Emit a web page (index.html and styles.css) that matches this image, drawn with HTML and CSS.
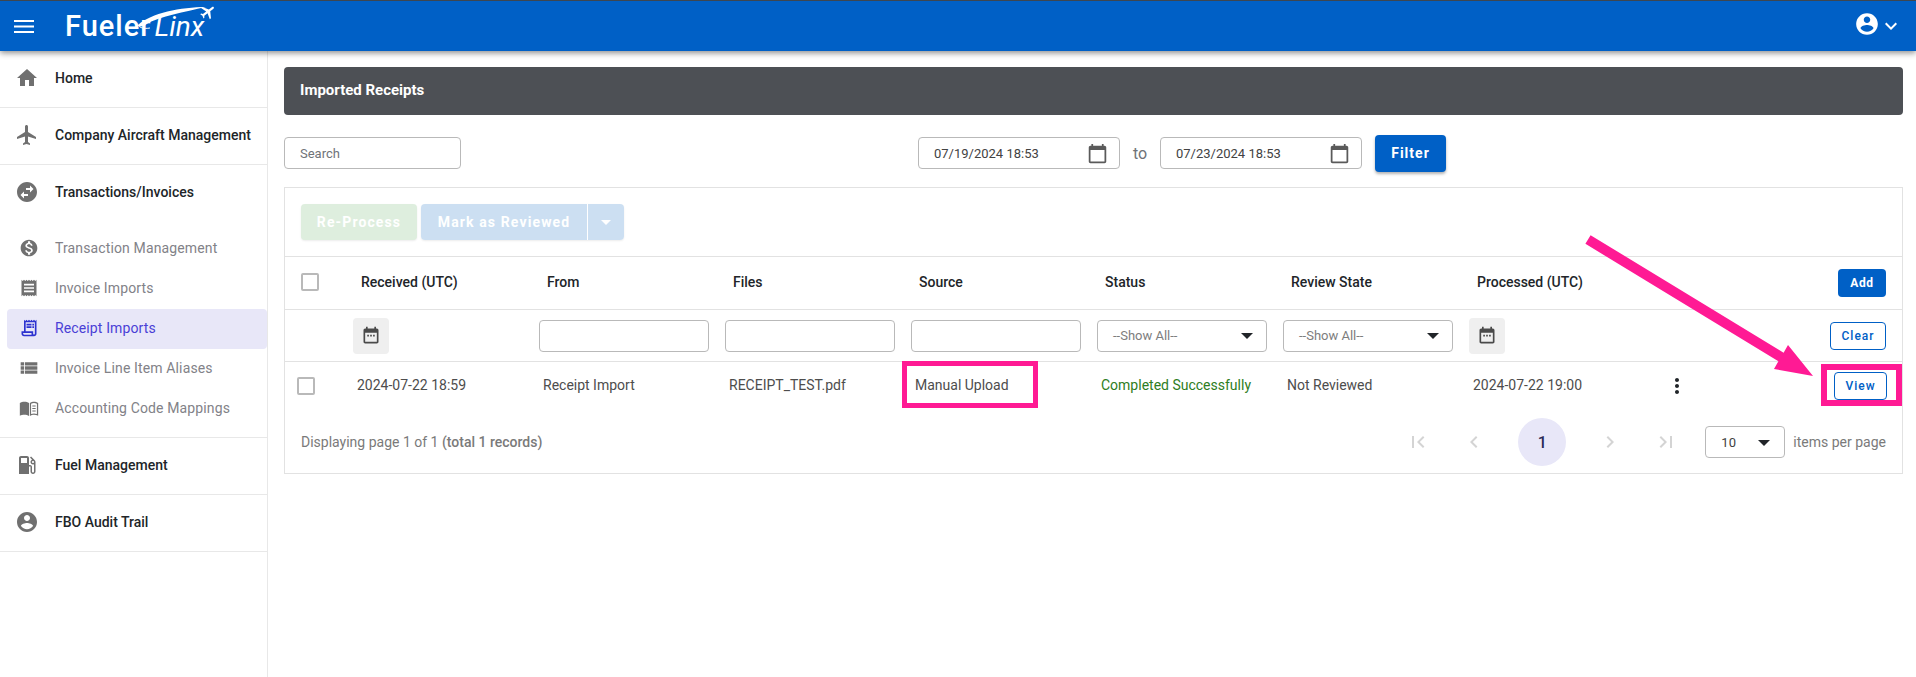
FILE: index.html
```html
<!DOCTYPE html>
<html lang="en">
<head>
<meta charset="utf-8">
<title>FuelerLinx - Imported Receipts</title>
<link rel="stylesheet" href="styles.css">
</head>
<body>
<header class="topbar">
  <svg class="hamburger" viewBox="0 0 20 13"><path d="M0 0h20v2H0zM0 5.500h20v2H0zM0 11h20v2H0z"/></svg>
  <div class="logo">
    <span class="logo-a">Fueler</span><span class="logo-b">Linx</span>
    <svg class="logo-swoosh" viewBox="0 0 150 40">
      <path d="M72 18C85 6 115 0 140 0 118 5 95 9 80 17 76 20 73 20 72 18z" fill="#fff"/>
      <path d="M72 18c2 3 6 4 12 3" fill="none" stroke="#fff" stroke-width="1"/>
      <path transform="translate(142 5) rotate(52) scale(.75) translate(-12 -12)" d="M21 16v-2l-8-5V3.500c0-.83-.67-1.500-1.500-1.500S10 2.670 10 3.500V9l-8 5v2l8-2.500V19l-2 1.500V22l3.500-1 3.500 1v-1.500L13 19v-5.500l8 2.500z" fill="#fff"/>
    </svg>
  </div>
  <div class="user">
    <svg class="user-icon" viewBox="0 0 24 24"><path d="M12 2C6.480 2 2 6.480 2 12s4.480 10 10 10 10-4.480 10-10S17.520 2 12 2zm0 3c1.660 0 3 1.340 3 3s-1.340 3-3 3-3-1.340-3-3 1.340-3 3-3zm0 14.200c-2.500 0-4.710-1.280-6-3.220.03-1.990 4-3.080 6-3.080 1.990 0 5.970 1.090 6 3.080-1.290 1.940-3.500 3.220-6 3.220z"/></svg>
    <svg class="user-caret" viewBox="0 0 24 24"><path d="M16.590 8.590L12 13.170 7.410 8.590 6 10l6 6 6-6z"/></svg>
  </div>
</header>

<div class="layout">
  <nav class="sidebar">
    <a class="nav-main"><svg class="nav-icon" viewBox="0 0 24 24"><path d="M10 20v-6h4v6h5v-8h3L12 3 2 12h3v8z"/></svg>Home</a>
    <a class="nav-main"><svg class="nav-icon" viewBox="0 0 24 24"><path d="M21 16v-2l-8-5V3.500c0-.83-.67-1.500-1.500-1.500S10 2.670 10 3.500V9l-8 5v2l8-2.500V19l-2 1.500V22l3.500-1 3.500 1v-1.500L13 19v-5.500l8 2.500z"/></svg>Company Aircraft Management</a>
    <div class="nav-group">
      <a class="nav-main nav-open"><svg class="nav-icon" viewBox="0 0 24 24"><path d="M12 2C6.480 2 2 6.480 2 12s4.480 10 10 10 10-4.480 10-10S17.520 2 12 2zm3 3.500L18.500 9 15 12.500V10h-4V8h4V5.500zm-6 13L5.500 15 9 11.500V14h4v2H9v2.500z"/></svg>Transactions/Invoices</a>
      <a class="nav-sub"><svg class="sub-icon" viewBox="0 0 24 24"><path d="M12 2C6.480 2 2 6.480 2 12s4.480 10 10 10 10-4.480 10-10S17.520 2 12 2zm1.410 16.090V20h-2.670v-1.930c-1.710-.36-3.160-1.460-3.270-3.400h1.960c.1 1.050.82 1.870 2.650 1.870 1.960 0 2.400-.98 2.400-1.590 0-.83-.44-1.610-2.670-2.140-2.480-.6-4.180-1.620-4.180-3.670 0-1.720 1.390-2.840 3.110-3.210V4h2.670v1.950c1.860.45 2.790 1.860 2.850 3.390H14.300c-.05-1.110-.64-1.870-2.220-1.870-1.500 0-2.400.68-2.400 1.640 0 .84.65 1.390 2.670 1.910s4.180 1.390 4.180 3.910c-.01 1.830-1.380 2.830-3.120 3.160z"/></svg>Transaction Management</a>
      <a class="nav-sub"><svg class="sub-icon" viewBox="0 0 24 24"><path d="M18 17H6v-2h12v2zm0-4H6v-2h12v2zm0-4H6V7h12v2zM3 22l1.500-1.500L6 22l1.500-1.500L9 22l1.500-1.500L12 22l1.500-1.500L15 22l1.500-1.500L18 22l1.500-1.500L21 22V2l-1.500 1.500L18 2l-1.500 1.500L15 2l-1.500 1.500L12 2l-1.500 1.500L9 2 7.500 3.500 6 2 4.500 3.500 3 2v20z"/></svg>Invoice Imports</a>
      <a class="nav-sub nav-active"><svg class="sub-icon" viewBox="0 0 24 24"><path d="M19.500 3.500L18 2l-1.500 1.500L15 2l-1.500 1.500L12 2l-1.500 1.500L9 2 7.500 3.500 6 2v14H3v3c0 1.660 1.340 3 3 3h12c1.660 0 3-1.340 3-3V2l-1.500 1.500zM15 20H6c-.55 0-1-.45-1-1v-1h10v2zm4-1c0 .55-.45 1-1 1s-1-.45-1-1v-3H8V5h11v14z"/><path d="M9 7h6v2H9zm7 0h2v2h-2zM9 10h6v2H9zm7 0h2v2h-2z"/></svg>Receipt Imports</a>
      <a class="nav-sub"><svg class="sub-icon" viewBox="0 0 24 24"><path d="M2 14h4v-4H2v4zm0 5h4v-4H2v4zM2 9h4V5H2v4zm5 5h15v-4H7v4zm0 5h15v-4H7v4zM7 5v4h15V5H7z"/></svg>Invoice Line Item Aliases</a>
      <a class="nav-sub"><svg class="sub-icon" viewBox="0 0 24 24"><path d="M1 6c1.500-1 3.500-1.500 5.500-1.500S10.500 5 12 6v15.500c-1.500-1-3.500-1.500-5.500-1.500s-4 .5-5.500 1.200z"/><path d="M13 6c1.500-1 3.500-1.500 5-1.500 1.500 0 3.500.5 5 1.500v15.200c-1.500-.7-3.500-1.200-5-1.200-1.500 0-3.500.5-5 1.500zm1.500.9v12.200c1-.4 2.500-.6 3.500-.6s2.200.2 3.500.6V6.900c-1.300-.6-2.500-.9-3.500-.9s-2.500.3-3.500.9zM16 9h4v1.300h-4zm0 3h4v1.300h-4zm0 3h4v1.300h-4z"/></svg>Accounting Code Mappings</a>
    </div>
    <a class="nav-main"><svg class="nav-icon" viewBox="0 0 24 24"><path d="M19.770 7.230l.01-.01-3.720-3.720L15 4.560l2.110 2.110c-.94.36-1.610 1.260-1.610 2.330 0 1.380 1.120 2.500 2.500 2.500.36 0 .69-.08 1-.21v7.210c0 .55-.45 1-1 1s-1-.45-1-1V14c0-1.100-.9-2-2-2h-1V5c0-1.100-.9-2-2-2H6c-1.100 0-2 .9-2 2v16h10v-7.500h1.500v5c0 1.380 1.120 2.500 2.500 2.500s2.500-1.120 2.500-2.500V9c0-.69-.28-1.320-.73-1.770zM12 10H6V5h6v5zm6 0c-.55 0-1-.45-1-1s.45-1 1-1 1 .45 1 1-.45 1-1 1z"/></svg>Fuel Management</a>
    <a class="nav-main"><svg class="nav-icon" viewBox="0 0 24 24"><path d="M12 2C6.480 2 2 6.480 2 12s4.480 10 10 10 10-4.480 10-10S17.520 2 12 2zm0 3c1.660 0 3 1.340 3 3s-1.340 3-3 3-3-1.340-3-3 1.340-3 3-3zm0 14.200c-2.500 0-4.710-1.280-6-3.220.03-1.990 4-3.080 6-3.080 1.990 0 5.970 1.090 6 3.080-1.290 1.940-3.500 3.220-6 3.220z"/></svg>FBO Audit Trail</a>
  </nav>

  <main class="content">
    <h1 class="page-title">Imported Receipts</h1>

    <div class="filters">
      <input class="field field-search" placeholder="Search">
      <div class="field field-date">07/19/2024 18:53
        <svg class="date-icon" viewBox="0 0 24 24"><path d="M20 3h-1V1h-2v2H7V1H5v2H4c-1.100 0-2 .9-2 2v16c0 1.100.9 2 2 2h16c1.100 0 2-.9 2-2V5c0-1.100-.9-2-2-2zm0 18H4V8h16v13z"/></svg>
      </div>
      <span class="to">to</span>
      <div class="field field-date">07/23/2024 18:53
        <svg class="date-icon" viewBox="0 0 24 24"><path d="M20 3h-1V1h-2v2H7V1H5v2H4c-1.100 0-2 .9-2 2v16c0 1.100.9 2 2 2h16c1.100 0 2-.9 2-2V5c0-1.100-.9-2-2-2zm0 18H4V8h16v13z"/></svg>
      </div>
      <button class="btn btn-filter">Filter</button>
    </div>

    <section class="card">
      <div class="actions">
        <button class="btn btn-green">Re-Process</button>
        <div class="split">
          <button class="btn btn-light">Mark as Reviewed</button>
          <button class="btn btn-light btn-drop"><span class="caret caret-white"></span></button>
        </div>
      </div>

      <div class="grid-row head-row">
        <div class="cell"><span class="check"></span></div>
        <div class="cell">Received (UTC)</div>
        <div class="cell">From</div>
        <div class="cell">Files</div>
        <div class="cell">Source</div>
        <div class="cell">Status</div>
        <div class="cell">Review State</div>
        <div class="cell">Processed (UTC)</div>
        <div class="cell cell-end"><button class="btn btn-add">Add</button></div>
      </div>

      <div class="grid-row filter-row">
        <div></div>
        <div class="fcell"><span class="cal-btn"><svg viewBox="0 0 24 24"><path d="M19 3h-1V1h-2v2H8V1H6v2H5c-1.100 0-2 .9-2 2v14c0 1.100.9 2 2 2h14c1.100 0 2-.9 2-2V5c0-1.100-.9-2-2-2zm0 16H5V8h14v11z"/><path d="M7.500 10.500h2v2h-2zm3.500 0h2v2h-2zm3.500 0h2v2h-2z"/></svg></span></div>
        <div class="fcell"><input class="field field-fill"></div>
        <div class="fcell"><input class="field field-fill"></div>
        <div class="fcell"><input class="field field-fill"></div>
        <div class="fcell"><div class="field select">--Show All--<span class="caret"></span></div></div>
        <div class="fcell"><div class="field select">--Show All--<span class="caret"></span></div></div>
        <div class="fcell"><span class="cal-btn"><svg viewBox="0 0 24 24"><path d="M19 3h-1V1h-2v2H8V1H6v2H5c-1.100 0-2 .9-2 2v14c0 1.100.9 2 2 2h14c1.100 0 2-.9 2-2V5c0-1.100-.9-2-2-2zm0 16H5V8h14v11z"/><path d="M7.500 10.500h2v2h-2zm3.500 0h2v2h-2zm3.500 0h2v2h-2z"/></svg></span></div>
        <div class="cell cell-end"><button class="btn btn-outline btn-clear">Clear</button></div>
      </div>

      <div class="grid-row data-row">
        <div class="cell cell-check"><span class="check"></span></div>
        <div class="cell">2024-07-22 18:59</div>
        <div class="cell">Receipt Import</div>
        <div class="cell">RECEIPT_TEST.pdf</div>
        <div class="cell">Manual Upload</div>
        <div class="cell status-ok">Completed Successfully</div>
        <div class="cell">Not Reviewed</div>
        <div class="cell">2024-07-22 19:00</div>
        <div class="cell cell-row-end">
          <svg class="more" viewBox="0 0 24 24"><path d="M12 8c1.100 0 2-.9 2-2s-.9-2-2-2-2 .9-2 2 .9 2 2 2zm0 2c-1.100 0-2 .9-2 2s.9 2 2 2 2-.9 2-2-.9-2-2-2zm0 6c-1.100 0-2 .9-2 2s.9 2 2 2 2-.9 2-2-.9-2-2-2z"/></svg>
          <button class="btn btn-outline btn-view">View</button>
        </div>
      </div>

      <footer class="pager">
        <div class="pager-info">Displaying page 1 of 1 <strong>(total 1 records)</strong></div>
        <div class="pager-controls">
          <svg class="pg" viewBox="0 0 24 24"><path d="M18.410 16.590L13.820 12l4.590-4.590L17 6l-6 6 6 6zM6 6h2v12H6z"/></svg>
          <svg class="pg" viewBox="0 0 24 24"><path d="M15.410 7.410L14 6l-6 6 6 6 1.410-1.410L10.830 12z"/></svg>
          <span class="pg-current">1</span>
          <svg class="pg" viewBox="0 0 24 24"><path d="M10 6L8.590 7.410 13.170 12l-4.580 4.590L10 18l6-6z"/></svg>
          <svg class="pg" viewBox="0 0 24 24"><path d="M5.590 7.410L10.180 12l-4.590 4.590L7 18l6-6-6-6zM16 6h2v12h-2z"/></svg>
        </div>
        <div class="field select page-size">10<span class="caret"></span></div>
        <span class="per-page">items per page</span>
      </footer>
    </section>
  </main>
</div>

<div class="mark mark-source"></div>
<div class="mark mark-view"></div>
<svg class="arrow" viewBox="0 0 240 150"><path d="M3.600-.8L196.600 116.700 201 109 226 140 187 133 191.400 125.300-1.600 7.800z"/></svg>
</body>
</html>
```
FILE: styles.css
```css
* { box-sizing: border-box; }
html, body { margin: 0; height: 677px; overflow: hidden; background: #fff; }
body { font-family: Roboto, "Liberation Sans", sans-serif; font-size: 14px; color: #212529; position: relative; }

.topbar { height: 51px; background: #0060c6; border-top: 1px solid #3d4650; display: flex; align-items: center; padding: 0 13px 0 14px; box-shadow: 0 2px 6px rgba(0,0,0,.45); position: relative; z-index: 2; }
.hamburger { width: 20px; height: 13px; fill: #fff; }
.logo { position: relative; margin-left: 31px; height: 36px; width: 150px; display: flex; align-items: center; color: #fff; white-space: nowrap; }
.logo-a { font-size: 29px; font-weight: 500; letter-spacing: 1px; }
.logo-b { font-size: 28px; font-style: italic; font-weight: 400; margin-left: 3px; }
.logo-swoosh { position: absolute; left: 1px; top: -1px; width: 150px; height: 40px; overflow: visible; }
.user { margin-left: auto; display: flex; align-items: center; }
.user-icon { width: 26px; height: 26px; fill: #fff; margin-bottom: 5px; }
.user-caret { width: 24px; height: 24px; fill: #fff; margin-left: -1px; }

.layout { display: flex; height: 626px; }
.sidebar { width: 268px; flex: none; border-right: 1px solid #e8e8e8; }
.nav-main { display: flex; align-items: center; height: 57px; padding-left: 15px; font-weight: 500; font-size: 14px; color: #212529; border-bottom: 1px solid #e8e8e8; padding-bottom: 2px; }
.nav-icon { width: 24px; height: 24px; fill: #707070; margin-right: 16px; flex: none; }
.nav-group { border-bottom: 1px solid #e8e8e8; height: 273px; }
.nav-open { border-bottom: 0; height: 64px; padding-bottom: 10px; }
.nav-sub { display: flex; align-items: center; height: 40px; margin-left: 7px; padding: 0 0 2px 12px; color: #828288; font-weight: 400; letter-spacing: .13px; border-radius: 4px; }
.sub-icon { width: 20px; height: 20px; fill: #707070; margin-right: 16px; flex: none; }
.nav-active { background: #e8e7f8; color: #4a3fd6; }
.nav-active .sub-icon { fill: #2d33d0; }

.content { flex: 1; padding: 16px 13px 0 16px; min-width: 0; }
.page-title { margin: 0; height: 48px; background: #4d5055; border-radius: 4px; color: #fff; font-size: 15px; font-weight: 700; line-height: 46px; padding-left: 16px; }

.filters { display: flex; align-items: center; height: 32px; margin-top: 22px; }
.field { height: 32px; border: 1px solid #b9b9b9; border-radius: 4px; background: #fff; font: 400 13px Roboto, "Liberation Sans", sans-serif; color: #424242; padding: 0 15px; outline: none; }
.field::placeholder { color: #6f7378; opacity: 1; }
.field-search { width: 177px; }
.field-date { width: 202px; display: flex; align-items: center; justify-content: space-between; padding-right: 11px; }
.field-search + .field-date { margin-left: 457px; }
.date-icon { width: 21px; height: 21px; fill: #5a5a5a; }
.to { width: 40px; text-align: center; color: #6f7378; font-size: 16px; }
.btn { border: 0; border-radius: 4px; font-family: inherit; font-weight: 700; letter-spacing: 1px; }
.btn-filter { width: 71px; height: 37px; margin-left: 13px; background: #0060c6; color: #fff; font-size: 14px; box-shadow: 0 2px 3px rgba(0,0,0,.3); }

.card { margin-top: 18px; height: 287px; border: 1px solid #e2e2e2; }
.actions { display: flex; align-items: center; gap: 4px; height: 69px; padding: 0 0 0 16px; border-bottom: 1px solid #e2e2e2; }
.btn-green { width: 116px; height: 36px; background: #deeede; color: #fff; font-size: 14px; letter-spacing: 1.12px; box-shadow: 0 1px 2px rgba(0,0,0,.08); }
.split { display: flex; gap: 1px; box-shadow: 0 1px 2px rgba(0,0,0,.08); border-radius: 4px; }
.btn-light { height: 36px; background: #ccdff2; color: #fff; font-size: 14px; letter-spacing: 1.12px; width: 166px; border-radius: 4px 0 0 4px; }
.btn-drop { width: 36px; border-radius: 0 4px 4px 0; display: flex; align-items: center; justify-content: center; padding: 0; }

.grid-row { display: grid; grid-template-columns: 60px repeat(7, 186px) 1fr; align-items: center; border-bottom: 1px solid #e2e2e2; }
.cell { padding-left: 16px; white-space: nowrap; }
.cell-end { padding: 0 16px 0 0; display: flex; justify-content: flex-end; }
.head-row { height: 53px; font-weight: 500; padding-bottom: 2px; }
.head-row .cell-end { padding-top: 2px; }
.filter-row { height: 52px; }
.fcell { padding: 0 8px; }
.field-fill { width: 170px; display: block; }
.select { width: 170px; display: flex; align-items: center; justify-content: space-between; color: #7d7d7d; padding-right: 13px; }
.caret { width: 0; height: 0; border-left: 6px solid transparent; border-right: 6px solid transparent; border-top: 6px solid #212529; margin-top: 1px; }
.caret-white { border-top-color: #fff; border-left-width: 5px; border-right-width: 5px; border-top-width: 5px; }
.check { display: block; width: 18px; height: 18px; border: 2px solid #b9b9b9; border-radius: 2px; background: #fff; }
.cal-btn { width: 36px; height: 36px; border-radius: 4px; background: #efefef; display: flex; align-items: center; justify-content: center; }
.cal-btn svg { width: 20px; height: 20px; fill: #4a4a4a; }
.btn-add { width: 48px; height: 28px; padding: 0; background: #0060c6; color: #fff; font-size: 12px; letter-spacing: .6px; }
.btn-outline { height: 28px; padding: 0; background: #fff; color: #0060c6; border: 1px solid #0060c6; font-size: 12px; font-weight: 500; letter-spacing: 1px; }
.btn-clear { width: 56px; }
.btn-view { width: 53px; }

.data-row { grid-template-columns: 56px repeat(7, 186px) 1fr; height: 48px; border-bottom: 0; color: #4d4d4d; padding-bottom: 2px; }
.cell-check { padding: 2px 0 0 12px; }
.status-ok { color: #2e7d22; }
.cell-row-end { display: flex; align-items: center; padding: 2px 15px 0 22px; justify-content: space-between; }
.more { width: 24px; height: 24px; fill: #212529; }

.pager { display: flex; align-items: center; height: 64px; padding: 0 16px 0 16px; }
.pager-info { color: #7a7a7a; flex: 1; }
.pager-info strong { font-weight: 500; }
.pager-controls { display: flex; align-items: center; gap: 32px; margin-right: 27px; }
.pg { width: 24px; height: 24px; fill: #d4d4d4; }
.pg-current { width: 48px; height: 48px; border-radius: 50%; background: #e8e7f8; display: flex; align-items: center; justify-content: center; font-size: 16px; font-weight: 500; color: #2b2b55; }
.page-size { width: 80px; color: #424242; padding-right: 14px; }
.per-page { margin-left: 8px; color: #7a7a7a; }

.mark { position: absolute; border: 5px solid #ff1a94; }
.mark-source { left: 902px; top: 361px; width: 136px; height: 47px; }
.mark-view { left: 1821px; top: 364px; width: 81px; height: 42px; border-width: 6px; }
.arrow { position: absolute; left: 1587px; top: 236px; width: 240px; height: 150px; fill: #ff1a94; overflow: visible; }
```
